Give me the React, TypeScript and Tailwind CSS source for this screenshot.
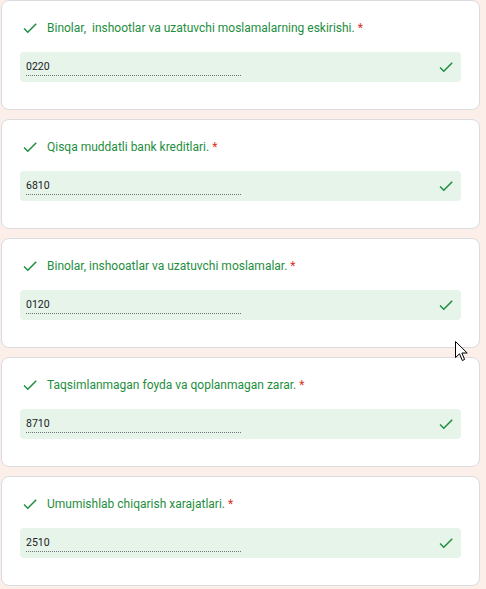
import React from "react";

const items = [
  { q: "Binolar,\u00a0 inshootlar va uzatuvchi moslamalarning eskirishi.", a: "0220" },
  { q: "Qisqa muddatli bank kreditlari.", a: "6810" },
  { q: "Binolar, inshooatlar va uzatuvchi moslamalar.", a: "0120" },
  { q: "Taqsimlanmagan foyda va qoplanmagan zarar.", a: "8710" },
  { q: "Umumishlab chiqarish xarajatlari.", a: "2510" },
];

function Check({ className }: { className?: string }) {
  return (
    <svg viewBox="0 0 24 24" width="18" height="18" className={className} fill="#1e8e3e">
      <path d="M9 16.17L4.83 12l-1.42 1.41L9 19 21 7l-1.41-1.41z" />
    </svg>
  );
}

export default function App() {
  return (
    <div
      className="relative w-[486px] h-[589px] bg-[#fcefe9] overflow-hidden"
      style={{ fontFamily: "Roboto, 'Liberation Sans', sans-serif" }}
    >
      <div className="flex flex-col gap-[9px] pl-[1px] w-[480px]">
        {items.map((it, i) => (
          <div
            key={i}
            className="h-[110px] bg-white border border-[#dadce0] rounded-[8px] flex flex-col pt-[18px] px-[18px]"
          >
            <div className="h-[18px] flex items-center">
              <Check className="ml-[1px]" />
              <span className="ml-[8px] text-[12px] text-[#1e8e3e] leading-none whitespace-pre">
                {it.q}
                <span className="text-[#d93025]"> *</span>
              </span>
            </div>
            <div className="mt-[15px] h-[30px] bg-[#e6f4ea] rounded-[4px] flex items-center pl-[6px] pr-[6px]">
              <div className="w-[215px] h-[30px] flex flex-col justify-center pt-[2px]">
                <span className="text-[10.5px] text-[#202124] leading-[13px]">{it.a}</span>
                <div className="mt-[2px] border-b border-dotted border-[#70757a]" />
              </div>
              <div className="flex-1" />
              <Check />
            </div>
          </div>
        ))}
      </div>
      <svg
        className="absolute left-[455px] top-[341px]"
        width="14"
        height="22"
        viewBox="0 0 14 22"
      >
        <path
          d="M0.5 0.5 L0.5 16.5 L4.5 12.8 L7.3 19.5 L9.6 18.5 L6.9 12 L12.2 12 Z"
          fill="white"
          stroke="black"
          strokeWidth="1"
          strokeLinejoin="round"
        />
      </svg>
    </div>
  );
}
